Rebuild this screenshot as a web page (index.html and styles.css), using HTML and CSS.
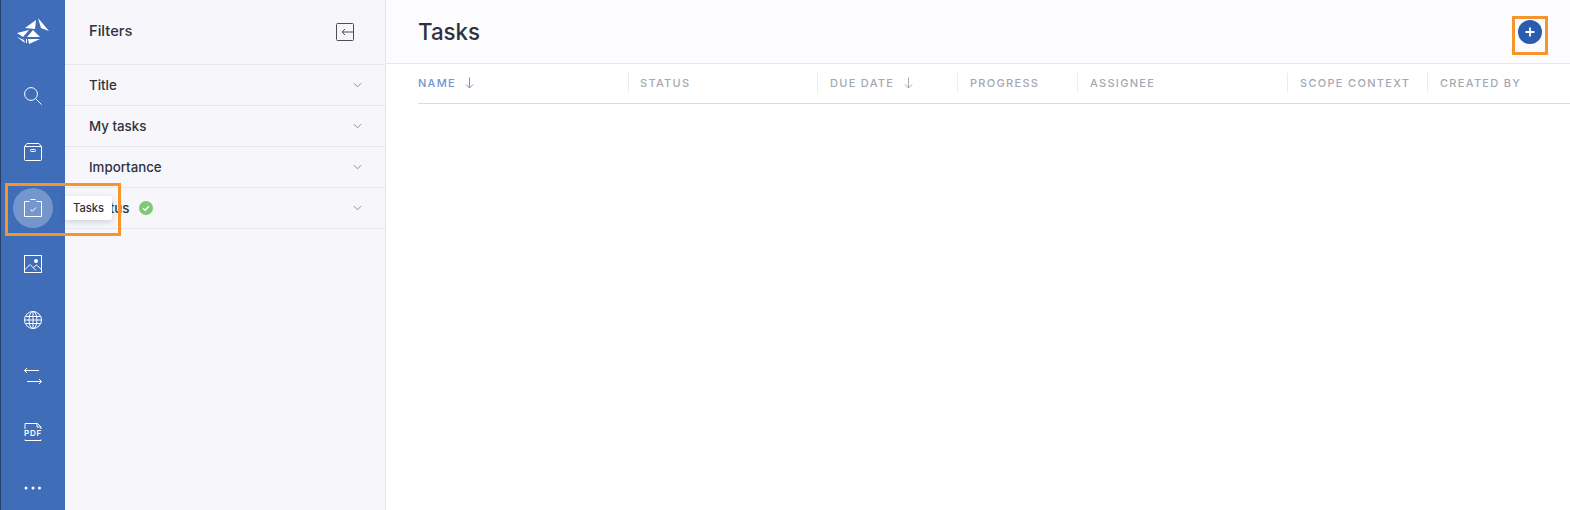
FILE: index.html
```html
<!DOCTYPE html>
<html lang="en">
<head>
<meta charset="utf-8">
<title>Tasks</title>
<link rel="stylesheet" href="styles.css">
</head>
<body>
<div class="app">
  <nav class="rail">
    <div class="logo">
      <svg width="34" height="30" viewBox="0 0 34 30" fill="#fff">
        <polygon points="22,1 33,14 25,11"/>
        <polygon points="20,3 9,11 19,12"/>
        <polygon points="1,16 13,13 7,20"/>
        <polygon points="17,13 24,20 11,20"/>
        <polygon points="1,20 8,23 9,26"/>
        <polygon points="10,22 11,22 11,26 10,26"/>
        <polygon points="12,22 24,22 13,27"/>
      </svg>
    </div>
    <div class="rail-item">
      <svg class="ico" viewBox="0 0 18 18"><circle cx="7" cy="7" r="6.400"/><path d="M11.600 11.600 17.600 17.600"/></svg>
    </div>
    <div class="rail-item">
      <svg class="ico" viewBox="0 0 18 18"><path d="M3 .5h12l2.500 3v13a1 1 0 0 1-1 1H1.500a1 1 0 0 1-1-1v-13zM.5 3.500h17"/><rect x="6.500" y="6.500" width="5" height="2" rx=".8"/></svg>
    </div>
    <div class="rail-item">
      <span class="active-dot"></span>
      <svg class="ico" viewBox="0 0 18 18"><path d="M5.500 2.500H.5v15h17v-15h-5M6.500.5h5"/><path d="M6.500 10.500 8.300 12.300 12 8.500"/></svg>
    </div>
    <div class="rail-item">
      <svg class="ico" viewBox="0 0 18 18"><rect x=".5" y=".5" width="17" height="17"/><path d="M.5 15 6 9.500 12 15.500M9.500 12.500 12.500 10 17.500 14.500"/><circle class="solid" cx="12" cy="6" r="2"/></svg>
    </div>
    <div class="rail-item">
      <svg class="ico" viewBox="0 0 18 18"><circle cx="9" cy="9" r="8.500"/><ellipse cx="9" cy="9" rx="4" ry="8.500"/><path d="M9 .5v17M1.500 5.500h15M.5 9h17M1.500 12.500h15"/></svg>
    </div>
    <div class="rail-item">
      <svg class="ico" viewBox="0 0 18 18"><path d="M15 3.500H.5M3 1 .5 3.500 3 6M3 14.500h14.500M15 12l2.500 2.500L15 17"/></svg>
    </div>
    <div class="rail-item">
      <span class="pdf-icon">
        <svg class="ico" viewBox="0 0 18 18"><path d="M1 6V.5h12.500L17 4v2M13 .5V4h4M1 16.500v1h16v-1"/></svg>
        <span class="pdf-label">PDF</span>
      </span>
    </div>
    <div class="rail-item">
      <svg class="ico" viewBox="0 0 18 4"><circle class="solid" cx="2" cy="2" r="1.500"/><circle class="solid" cx="9" cy="2" r="1.500"/><circle class="solid" cx="15.500" cy="2" r="1.500"/></svg>
    </div>
  </nav>

  <aside class="filters">
    <header class="filters-head">
      <span class="filters-title">Filters</span>
      <svg class="collapse" width="18" height="18" viewBox="0 0 18 18"><rect x=".5" y=".5" width="17" height="17" rx="1"/><path d="M17.500 9H6M9 6 6 9l3 3"/></svg>
    </header>
    <div class="filter-row"><span class="filter-name">Title</span><svg class="chev" viewBox="0 0 10 6"><path d="M1 1l4 4 4-4"/></svg></div>
    <div class="filter-row"><span class="filter-name">My tasks</span><svg class="chev" viewBox="0 0 10 6"><path d="M1 1l4 4 4-4"/></svg></div>
    <div class="filter-row"><span class="filter-name">Importance</span><svg class="chev" viewBox="0 0 10 6"><path d="M1 1l4 4 4-4"/></svg></div>
    <div class="filter-row"><span class="filter-name">Status</span>
      <svg class="check" width="14" height="14" viewBox="0 0 14 14"><circle cx="7" cy="7" r="7"/><path d="M4 7.200 6.100 9.200 10 5.200"/></svg>
      <svg class="chev" viewBox="0 0 10 6"><path d="M1 1l4 4 4-4"/></svg></div>
  </aside>

  <main class="main">
    <header class="main-head">
      <h1 class="main-title">Tasks</h1>
      <span class="add-btn"><svg width="10" height="10" viewBox="0 0 10 10"><path d="M5 .5v9M.5 5h9"/></svg></span>
    </header>
    <div class="table-head">
      <div class="col col-name sorted">Name<svg class="sort" viewBox="0 0 9 12"><path d="M4.500.5v10.500M1 7.500 4.500 11 8 7.500"/></svg></div>
      <div class="col col-status">Status</div>
      <div class="col col-due">Due date<svg class="sort" viewBox="0 0 9 12"><path d="M4.500.5v10.500M1 7.500 4.500 11 8 7.500"/></svg></div>
      <div class="col col-progress">Progress</div>
      <div class="col col-assignee">Assignee</div>
      <div class="col col-scope">Scope context</div>
      <div class="col col-created">Created by</div>
    </div>
  </main>

  <div class="tooltip">Tasks</div>
  <div class="mark mark-tasks"></div>
  <div class="mark mark-add"></div>
</div>
</body>
</html>
```
FILE: styles.css
```css
* { box-sizing: border-box; }
html, body { margin: 0; height: 100%; overflow: hidden; background: #fff; }
body { font-family: "Inter", "Liberation Sans", sans-serif; color: #2e3240; }
.app { position: relative; display: flex; height: 510px; width: 1570px; overflow: hidden; }

.rail { flex: 0 0 65px; background: #3f6db8; border-left: 1px solid #24406c; display: flex; flex-direction: column; }
.logo { flex: 0 0 68px; display: flex; align-items: center; justify-content: center; padding: 0 1px 4px 0; }
.rail-item { position: relative; flex: 0 0 56px; display: flex; align-items: center; justify-content: center; }
.ico { width: 18px; height: 18px; fill: none; stroke: #fff; stroke-width: 1; position: relative; }
.ico .solid { fill: #fff; stroke: none; }
.active-dot { position: absolute; left: 12px; top: 8px; width: 40px; height: 40px; border-radius: 50%; background: #7595cd; }
.pdf-icon { position: relative; display: block; width: 18px; height: 18px; }
.pdf-icon .ico { display: block; }
.pdf-label { position: absolute; left: 0; right: 0; top: 6px; text-align: center; color: #fff; font-size: 8px; line-height: 9px; font-weight: 600; letter-spacing: .8px; }
.rail-item:last-child .ico { height: 4px; }

.filters { flex: 0 0 321px; background: #f7f7fb; border-right: 1px solid #e4e4ea; }
.filters-head { height: 65px; display: flex; align-items: center; justify-content: space-between; padding: 0 31px 3px 24px; border-bottom: 1px solid #e6e6ec; }
.filters-title { font-size: 14.700px; font-weight: 500; }
.collapse { fill: none; stroke: #4a4e5a; stroke-width: 1; margin-top: 2px; }
.filter-row { height: 41px; display: flex; align-items: center; padding: 0 23px 0 24px; border-bottom: 1px solid #e6e6ec; font-size: 13.300px; font-weight: 500; }
.filter-name { margin-right: 10px; padding-bottom: 1px; }
.chev { width: 9px; height: 6px; margin-left: auto; fill: none; stroke: #7d808c; stroke-width: 1; }

.check circle { fill: #7fc974; }
.check path { fill: none; stroke: #fff; stroke-width: 1.500; }

.main { flex: 1; min-width: 0; }
.main-head { height: 64px; background: #fcfcfe; border-bottom: 1px solid #e6e6ec; display: flex; align-items: center; justify-content: space-between; padding: 0 28px 0 32px; }
.main-title { margin: 0; padding-top: 1px; font-size: 22.300px; font-weight: 500; line-height: 1; }
.add-btn { width: 24px; height: 24px; border-radius: 50%; background: #2a5cae; display: flex; align-items: center; justify-content: center; }
.add-btn svg { fill: none; stroke: #fff; stroke-width: 1.800; }

.table-head { margin-left: 32px; height: 40px; border-bottom: 1px solid #dcdce0; display: flex; align-items: center; padding-bottom: 2px; }
.col { height: 20px; display: flex; align-items: center; padding-left: 12px; border-left: 1px solid #ececf0; font-size: 11px; font-weight: 500; letter-spacing: 1.300px; text-transform: uppercase; color: #a5a7b4; white-space: nowrap; }
.col-name { width: 210px; padding-left: 0; border-left: 0; }
.col-status { width: 189px; padding-left: 11px; }
.col-due { width: 140px; }
.col-progress { width: 120px; }
.col-assignee { width: 210px; }
.col-scope { width: 140px; }
.col-created { flex: 1; }
.sorted { color: #6f94d0; }
.sort { width: 9px; height: 12px; margin-left: 9px; fill: none; stroke: currentColor; stroke-width: 1; }
.col-due .sort { margin-left: 10px; }

.tooltip { position: absolute; left: 65px; top: 196px; width: 47px; height: 24px; background: #fff; border-radius: 0 3px 3px 0; box-shadow: 0 2px 6px rgba(40,45,70,.2); font-size: 11.200px; font-weight: 500; line-height: 24px; padding-left: 8px; }
.mark { position: absolute; border: 3px solid #f7952b; }
.mark-tasks { left: 5px; top: 183px; width: 116px; height: 53px; }
.mark-add { left: 1512px; top: 16px; width: 36px; height: 39px; }
```
